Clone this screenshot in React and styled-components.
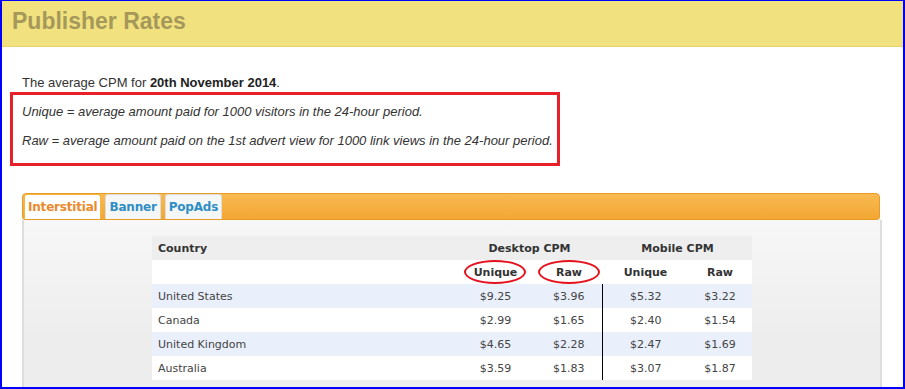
import styled, { createGlobalStyle } from 'styled-components'

const GlobalStyle = createGlobalStyle`
    html, body {
        margin: 0;
        padding: 0;
        background: #fff;
    }
`

const Frame = styled.div`
    box-sizing: border-box;
    width: 905px;
    height: 389px;
    overflow: hidden;
    border: 2px solid #0000ff;
    border-top-width: 1px;
    background: #fff;
    font-family: 'Liberation Sans', Arial, sans-serif;
`

const Header = styled.div`
    background: #f1e27f;
    border-bottom: 1px solid #e6d36c;
    padding: 7px 10px 12px;
`

const Title = styled.h1`
    margin: 0;
    font-size: 23px;
    line-height: 26px;
    font-weight: 700;
    color: #a5985a;
`

const Intro = styled.p`
    margin: 27px 0 1px 20px;
    font-size: 13px;
    line-height: 17px;
    color: #333;

    b {
        color: #222;
    }
`

const NoteBox = styled.div`
    box-sizing: border-box;
    width: 550px;
    margin-left: 8px;
    border: 3px solid #e8202a;
    padding: 8px 0 14px 9px;
`

const Note = styled.p`
    margin: 0;
    font-size: 13px;
    line-height: 17px;
    font-style: italic;
    color: #333;

    & + & {
        margin-top: 12px;
    }
`

const Panel = styled.div`
    width: 860px;
    margin: 27px 0 0 20px;
    font-family: 'DejaVu Sans', Verdana, sans-serif;
`

const TabBar = styled.div`
    box-sizing: border-box;
    height: 27px;
    width: 858px;
    display: flex;
    align-items: flex-end;
    gap: 4px;
    padding: 1px 0 0 1px;
    border: 1px solid #e99c25;
    border-radius: 4px 4px 3px 3px;
    background: linear-gradient(#f8ba52, #f3a733);
`

const Tab = styled.div`
    box-sizing: border-box;
    height: 25px;
    padding: 0 3px;
    display: flex;
    align-items: center;
    font-size: 12px;
    letter-spacing: -0.2px;
    font-weight: 700;
    border-radius: 3px 3px 0 0;
    border: 1px solid ${(p) => (p.$active ? '#f6b53c' : '#dcdcdc')};
    border-bottom: none;
    background: ${(p) => (p.$active ? '#fff' : '#f5f6f6')};
    color: ${(p) => (p.$active ? '#eb8a2d' : '#2f8ec4')};
`

const Content = styled.div`
    height: 200px;
    border-left: 2px solid #dddddd;
    border-right: 2px solid #dddddd;
    background: linear-gradient(#f7f7f7, #ededed 120px);
    padding-top: 16px;
    display: flex;
    align-items: flex-start;
    justify-content: center;
`

const Table = styled.table`
    width: 600px;
    border-collapse: collapse;
    table-layout: fixed;
    font-size: 11px;
`

const Row = styled.tr`
    height: 24px;
    background: ${(p) => p.$bg || '#fff'};
`

const HeadCell = styled.th`
    position: relative;
    padding: 0 6px;
    font-weight: 700;
    color: #333;
    text-align: ${(p) => p.$align || 'center'};

    &::after {
        content: '';
        display: ${(p) => (p.$circled ? 'block' : 'none')};
        position: absolute;
        left: 50%;
        top: 50%;
        width: ${(p) => p.$circled || 0}px;
        height: 20px;
        transform: translate(-50%, -50%);
        border: 2.5px solid #e4121c;
        border-radius: 50%;
    }
`

const Cell = styled.td`
    padding: 0 6px;
    color: #444;
    text-align: ${(p) => p.$align || 'center'};
    border-right: ${(p) => (p.$divider ? '1px solid #000' : 'none')};
`

const rates = [
    { country: 'United States', du: '$9.25', dr: '$3.96', mu: '$5.32', mr: '$3.22' },
    { country: 'Canada', du: '$2.99', dr: '$1.65', mu: '$2.40', mr: '$1.54' },
    { country: 'United Kingdom', du: '$4.65', dr: '$2.28', mu: '$2.47', mr: '$1.69' },
    { country: 'Australia', du: '$3.59', dr: '$1.83', mu: '$3.07', mr: '$1.87' },
]

const App = () => {
    return (
        <>
            <GlobalStyle />
            <Frame>
                <Header>
                    <Title>Publisher Rates</Title>
                </Header>

                <Intro>
                    The average CPM for <b>20th November 2014</b>.
                </Intro>

                <NoteBox>
                    <Note>Unique = average amount paid for 1000 visitors in the 24-hour period.</Note>
                    <Note>Raw = average amount paid on the 1st advert view for 1000 link views in the 24-hour period.</Note>
                </NoteBox>

                <Panel>
                    <TabBar>
                        <Tab $active>Interstitial</Tab>
                        <Tab>Banner</Tab>
                        <Tab>PopAds</Tab>
                    </TabBar>

                    <Content>
                        <Table>
                            <colgroup>
                                <col style={{ width: 304 }} />
                                <col style={{ width: 79 }} />
                                <col style={{ width: 68 }} />
                                <col style={{ width: 85 }} />
                                <col style={{ width: 64 }} />
                            </colgroup>
                            <thead>
                                <Row $bg="#eeeeee">
                                    <HeadCell $align="left">Country</HeadCell>
                                    <HeadCell colSpan={2}>Desktop CPM</HeadCell>
                                    <HeadCell colSpan={2}>Mobile CPM</HeadCell>
                                </Row>
                                <Row>
                                    <HeadCell />
                                    <HeadCell $circled={58}>Unique</HeadCell>
                                    <HeadCell $circled={58}>Raw</HeadCell>
                                    <HeadCell>Unique</HeadCell>
                                    <HeadCell>Raw</HeadCell>
                                </Row>
                            </thead>
                            <tbody>
                                {rates.map((r, i) => (
                                    <Row key={r.country} $bg={i % 2 === 0 ? '#eaf0fb' : '#fff'}>
                                        <Cell $align="left">{r.country}</Cell>
                                        <Cell>{r.du}</Cell>
                                        <Cell $divider>{r.dr}</Cell>
                                        <Cell>{r.mu}</Cell>
                                        <Cell>{r.mr}</Cell>
                                    </Row>
                                ))}
                            </tbody>
                        </Table>
                    </Content>
                </Panel>
            </Frame>
        </>
    )
}

export default App
